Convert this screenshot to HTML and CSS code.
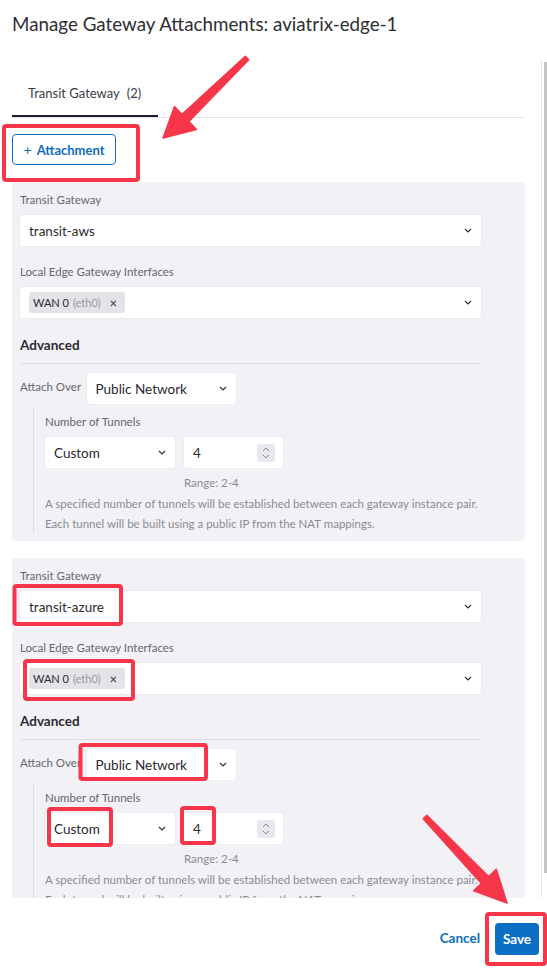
FILE: index.html
```html
<!DOCTYPE html>
<html>
<head>
<meta charset="utf-8">
<link rel="stylesheet" href="styles.css">
</head>
<body>
<div class="modal">
  <h1 class="title">Manage Gateway Attachments: aviatrix-edge-1</h1>
  <div class="scroll">
    <div class="content">
      <div class="tabs">
        <div class="tab">Transit Gateway <span class="count">(2)</span></div>
      </div>
      <button class="btn-outline"><span class="plus">+</span> Attachment</button>

      <div class="card">
        <div class="label">Transit Gateway</div>
        <div class="select wide"><span>transit-aws</span><svg class="chev" width="8" height="5" viewBox="0 0 8 5"><path d="M1 1l3 3 3-3" fill="none" stroke="#333" stroke-width="1.2"/></svg></div>
        <div class="label gap">Local Edge Gateway Interfaces</div>
        <div class="select wide multi"><span class="chip"><b>WAN 0</b> <i>(eth0)</i><span class="x">×</span></span><svg class="chev" width="8" height="5" viewBox="0 0 8 5"><path d="M1 1l3 3 3-3" fill="none" stroke="#333" stroke-width="1.2"/></svg></div>
        <div class="advanced">Advanced</div>
        <div class="attach-row">
          <span class="inline-label">Attach Over</span>
          <div class="select net"><span>Public Network</span><svg class="chev" width="8" height="5" viewBox="0 0 8 5"><path d="M1 1l3 3 3-3" fill="none" stroke="#333" stroke-width="1.2"/></svg></div>
        </div>
        <div class="nested">
          <div class="label">Number of Tunnels</div>
          <div class="tunnel-grid">
            <div class="select custom"><span>Custom</span><svg class="chev" width="8" height="5" viewBox="0 0 8 5"><path d="M1 1l3 3 3-3" fill="none" stroke="#333" stroke-width="1.2"/></svg></div>
            <div class="select num"><span>4</span><span class="spin"><svg width="10" height="14" viewBox="0 0 10 14"><path d="M2 5l3-3 3 3M2 9l3 3 3-3" fill="none" stroke="#888" stroke-width="1"/></svg></span></div>
            <div></div>
            <div class="range">Range: 2-4</div>
          </div>
          <div class="desc">A specified number of tunnels will be established between each gateway instance pair.</div>
          <div class="desc">Each tunnel will be built using a public IP from the NAT mappings.</div>
        </div>
      </div>

      <div class="card">
        <div class="label">Transit Gateway</div>
        <div class="select wide"><span>transit-azure</span><svg class="chev" width="8" height="5" viewBox="0 0 8 5"><path d="M1 1l3 3 3-3" fill="none" stroke="#333" stroke-width="1.2"/></svg></div>
        <div class="label gap">Local Edge Gateway Interfaces</div>
        <div class="select wide multi"><span class="chip"><b>WAN 0</b> <i>(eth0)</i><span class="x">×</span></span><svg class="chev" width="8" height="5" viewBox="0 0 8 5"><path d="M1 1l3 3 3-3" fill="none" stroke="#333" stroke-width="1.2"/></svg></div>
        <div class="advanced">Advanced</div>
        <div class="attach-row">
          <span class="inline-label">Attach Over</span>
          <div class="select net"><span>Public Network</span><svg class="chev" width="8" height="5" viewBox="0 0 8 5"><path d="M1 1l3 3 3-3" fill="none" stroke="#333" stroke-width="1.2"/></svg></div>
        </div>
        <div class="nested">
          <div class="label">Number of Tunnels</div>
          <div class="tunnel-grid">
            <div class="select custom"><span>Custom</span><svg class="chev" width="8" height="5" viewBox="0 0 8 5"><path d="M1 1l3 3 3-3" fill="none" stroke="#333" stroke-width="1.2"/></svg></div>
            <div class="select num"><span>4</span><span class="spin"><svg width="10" height="14" viewBox="0 0 10 14"><path d="M2 5l3-3 3 3M2 9l3 3 3-3" fill="none" stroke="#888" stroke-width="1"/></svg></span></div>
            <div></div>
            <div class="range">Range: 2-4</div>
          </div>
          <div class="desc">A specified number of tunnels will be established between each gateway instance pair.</div>
          <div class="desc">Each tunnel will be built using a public IP from the NAT mappings.</div>
        </div>
      </div>
    </div>
    <div class="scrollbar"><div class="thumb"></div></div>
  </div>
  <div class="footer">
    <span class="cancel">Cancel</span>
    <button class="btn-save">Save</button>
  </div>

  <svg class="annot" width="547" height="968" viewBox="0 0 547 968">
    <g fill="none" stroke="#f7364a" stroke-width="4" stroke-linejoin="round">
      <rect x="4" y="126" width="134" height="54" rx="2"/>
      <rect x="14.5" y="586" width="106.5" height="38" rx="2"/>
      <rect x="25" y="661" width="108" height="38" rx="2"/>
      <rect x="80.5" y="745" width="125.5" height="34" rx="2"/>
      <rect x="49" y="809" width="62" height="36" rx="2"/>
      <rect x="182" y="808" width="32" height="35" rx="2"/>
      <rect x="487" y="914" width="58" height="50" rx="2"/>
    </g>
    <g fill="#f7364a" stroke="#f7364a" stroke-width="1.5" stroke-linejoin="round">
      <polygon points="163,138 174.5,106.4 182.1,114.4 245.3,56.2 248.7,59.8 188.9,121.6 196.5,129.6"/>
      <polygon points="507,903 473.7,890.7 481.4,883.4 423.2,818.7 426.8,815.3 488.6,876.6 496.3,869.3"/>
    </g>
  </svg>
</div>
</body>
</html>
```

FILE: styles.css
```css
* { box-sizing: border-box; }
html, body { margin: 0; padding: 0; background: #fff; }
body { font-family: Lato, "Open Sans", sans-serif; color: #2d2d33; }

.modal {
  position: relative;
  width: 547px;
  height: 968px;
  overflow: hidden;
  display: flex;
  flex-direction: column;
}

.title {
  margin: 0;
  height: 60px;
  padding: 12px 0 0 12px;
  font-size: 18.8px;
  line-height: 24px;
  font-weight: 400;
  color: #2e2e33;
}

.scroll {
  height: 838px;
  display: flex;
  overflow: hidden;
}
.content {
  margin-left: 12px;
  width: 513px;
  flex: none;
}
.scrollbar {
  margin-left: 16px;
  width: 6px;
  border-left: 1px solid #e6e6e8;
  padding: 2px 0 25px 2px;
  display: flex;
}
.thumb { flex: 1; background: #c4c4c6; }

.tabs {
  margin-top: 12px;
  border-bottom: 1px solid #e2e2e4;
  display: flex;
}
.tab {
  padding: 12px 17px 12px 16px;
  line-height: 19px;
  font-size: 13px;
  color: #3a3a44;
  border-bottom: 2px solid #1e1e2c;
}
.tab .count { margin-left: 4px; }

.btn-outline {
  margin-top: 16px;
  height: 31px;
  width: 104px;
  padding: 0;
  border: 1px solid #1470c0;
  border-radius: 4px;
  background: #fff;
  color: #0d6ebf;
  font-family: inherit;
  font-size: 13px;
  font-weight: 700;
  display: flex;
  align-items: center;
  justify-content: center;
  gap: 2px;
}
.btn-outline .plus { font-weight: 400; font-size: 14px; margin-right: 3px; }

.card {
  margin-top: 17px;
  background: #f2f2f6;
  border-radius: 4px;
  padding: 10px 44px 7px 8px;
}

.label {
  font-size: 11.5px;
  line-height: 16px;
  color: #66666e;
  margin-bottom: 7px;
}
.label.gap { margin-top: 18px; }

.select {
  height: 31px;
  background: #fff;
  border-radius: 3px;
  box-shadow: 0 0 0 1px #ececf0;
  display: flex;
  align-items: center;
  justify-content: space-between;
  padding: 0 9px 0 9px;
  font-size: 13.5px;
  color: #2a2a30;
}
.select .chev { flex: none; }
.multi { padding-left: 9px; }

.chip {
  height: 21px;
  background: #e3e3e8;
  border-radius: 3px;
  display: flex;
  align-items: center;
  padding: 0 4px 0 4px;
  width: 96px;
  font-size: 11px;
  color: #2a2a30;
}
.chip b { font-weight: 400; }
.chip i { font-style: normal; color: #9a9aa0; margin-left: 4px; }
.chip .x { margin-left: auto; margin-right: 4px; font-size: 13px; color: #333; }

.advanced {
  margin-top: 18px;
  font-size: 13.5px;
  font-weight: 700;
  line-height: 18px;
  color: #2a2a30;
  padding-bottom: 9px;
  border-bottom: 1px solid #dedee2;
}

.attach-row {
  margin-top: 9px;
  display: flex;
  align-items: center;
}
.inline-label {
  font-size: 11.5px;
  color: #66666e;
  width: 66.5px;
  flex: none;
  margin-bottom: 4px;
}
.select.net { width: 149px; padding-left: 9px; }

.nested {
  margin-left: 13px;
  margin-top: 5px;
  border-left: 1px solid #dcdce0;
  padding: 5px 0 0 11px;
}

.tunnel-grid {
  display: grid;
  grid-template-columns: 130px 99px;
  column-gap: 9px;
}
.select.custom { padding-left: 9px; }
.select.num { padding: 0 8px 0 9px; }
.spin {
  width: 18px;
  height: 18px;
  background: #e8e8ee;
  border-radius: 2px;
  display: flex;
  align-items: center;
  justify-content: center;
}
.range {
  margin-top: 7px;
  font-size: 11.5px;
  line-height: 16px;
  color: #8a8a92;
}
.desc {
  font-size: 11.5px;
  line-height: 20px;
  color: #8a8a92;
}
.tunnel-grid + .desc { margin-top: 3px; }

.footer {
  flex: 1;
  display: flex;
  justify-content: flex-end;
  align-items: flex-start;
  padding: 25px 8px 0 0;
  gap: 15px;
}
.cancel {
  margin-top: 7px;
  font-size: 13.5px;
  font-weight: 700;
  color: #0d6ebf;
}
.btn-save {
  height: 32px;
  width: 44px;
  padding: 0;
  border: none;
  border-radius: 4px;
  background: #0b70c4;
  color: #fff;
  font-family: inherit;
  font-size: 13.5px;
  font-weight: 700;
}

.annot {
  position: absolute;
  left: 0;
  top: 0;
  pointer-events: none;
}
```
